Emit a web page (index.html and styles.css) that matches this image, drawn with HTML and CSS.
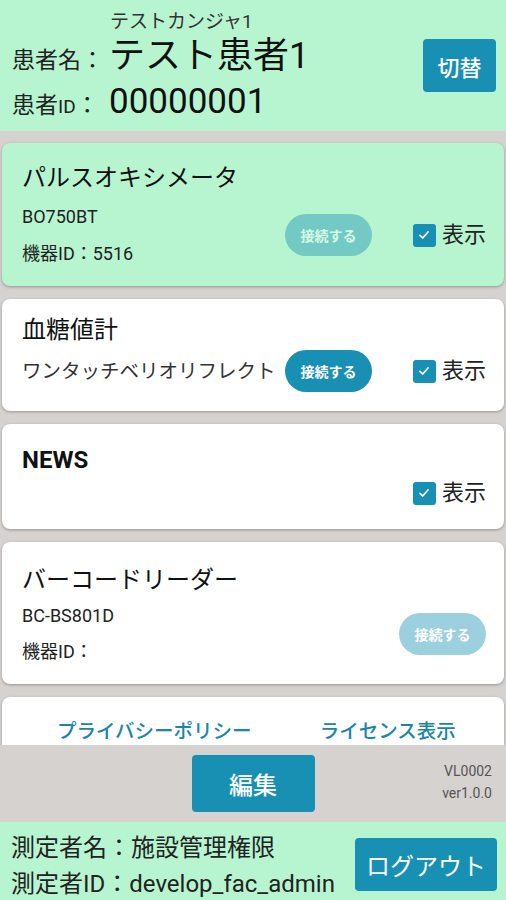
FILE: index.html
```html
<!DOCTYPE html>
<html lang="ja">
<head>
    <meta charset="UTF-8">
    <meta name="viewport" content="width=device-width, initial-scale=1.0">
    <title>機器選択</title>
    <link rel="stylesheet" href="styles.css">
</head>
<body>
    <div class="screen">
        <header class="patient">
            <div class="patient-info">
                <div class="kana">テストカンジャ1</div>
                <div class="patient-row">
                    <span class="label">患者名：</span><span class="patient-name">テスト患者1</span>
                </div>
                <div class="patient-row id-row">
                    <span class="label">患者<span class="small-id">ID</span>：</span><span class="patient-id">00000001</span>
                </div>
            </div>
            <button class="btn btn-switch">切替</button>
        </header>

        <main class="devices">
            <section class="card card-active card-pulse">
                <h2 class="card-title">パルスオキシメータ</h2>
                <div class="card-body">
                    <div class="card-info">
                        <div class="info-line">BO750BT</div>
                        <div class="info-line">機器ID：5516</div>
                    </div>
                    <div class="card-actions">
                        <button class="pill pill-disabled">接続する</button>
                        <label class="show-check"><span class="checkbox"><svg viewBox="0 0 24 24" width="16" height="16"><path d="M6 12.5l4 4 8-9" fill="none" stroke="#fff" stroke-width="2.6" stroke-linecap="round" stroke-linejoin="round"/></svg></span>表示</label>
                    </div>
                </div>
            </section>

            <section class="card card-glucose">
                <h2 class="card-title">血糖値計</h2>
                <div class="card-body">
                    <div class="card-info">
                        <div class="info-line model-name">ワンタッチベリオリフレクト</div>
                    </div>
                    <div class="card-actions">
                        <button class="pill">接続する</button>
                        <label class="show-check"><span class="checkbox"><svg viewBox="0 0 24 24" width="16" height="16"><path d="M6 12.5l4 4 8-9" fill="none" stroke="#fff" stroke-width="2.6" stroke-linecap="round" stroke-linejoin="round"/></svg></span>表示</label>
                    </div>
                </div>
            </section>

            <section class="card card-news">
                <h2 class="card-title news-title">NEWS</h2>
                <div class="card-body">
                    <div class="card-info"></div>
                    <div class="card-actions">
                        <label class="show-check"><span class="checkbox"><svg viewBox="0 0 24 24" width="16" height="16"><path d="M6 12.5l4 4 8-9" fill="none" stroke="#fff" stroke-width="2.6" stroke-linecap="round" stroke-linejoin="round"/></svg></span>表示</label>
                    </div>
                </div>
            </section>

            <section class="card card-barcode">
                <h2 class="card-title">バーコードリーダー</h2>
                <div class="card-body">
                    <div class="card-info">
                        <div class="info-line">BC-BS801D</div>
                        <div class="info-line">機器ID：</div>
                    </div>
                    <div class="card-actions">
                        <button class="pill pill-disabled">接続する</button>
                    </div>
                </div>
            </section>

            <section class="card card-links">
                <a href="#" class="link link-privacy">プライバシーポリシー</a>
                <a href="#" class="link">ライセンス表示</a>
            </section>
        </main>

        <div class="toolbar">
            <div></div>
            <button class="btn btn-edit">編集</button>
            <div class="version">
                <div>VL0002</div>
                <div>ver1.0.0</div>
            </div>
        </div>

        <footer class="operator">
            <div class="operator-info">
                <div class="operator-line">測定者名：施設管理権限</div>
                <div class="operator-line">測定者ID：develop_fac_admin</div>
            </div>
            <button class="btn btn-logout">ログアウト</button>
        </footer>
    </div>
</body>
</html>
```

FILE: styles.css
```css
body {
    margin: 0;
    font-family: Roboto, "Noto Sans CJK JP", sans-serif;
    color: #1b1b1b;
    background-color: #d5d2d0;
}
.screen {
    width: 506px;
    height: 900px;
    display: flex;
    flex-direction: column;
    overflow: hidden;
}
button {
    font-family: inherit;
    border: none;
    cursor: pointer;
}

/* patient header */
.patient {
    height: 131px;
    flex-shrink: 0;
    background-color: #b7f5d0;
    display: flex;
    justify-content: space-between;
    align-items: flex-start;
    padding-left: 12px;
    padding-right: 10px;
}
.kana {
    margin-top: 10px;
    margin-left: 98px;
    font-size: 19px;
    line-height: 24px;
    color: #333;
}
.patient-row {
    display: flex;
    align-items: baseline;
    line-height: 44px;
}
.id-row {
    line-height: 38px;
}
.label {
    display: inline-block;
    width: 97px;
    font-size: 23px;
    color: #222;
}
.small-id {
    font-size: 19px;
}
.patient-name {
    font-size: 36px;
    color: #111;
}
.patient-id {
    font-size: 35px;
    color: #111;
}
.btn {
    background-color: #1790b4;
    color: #fff;
    border-radius: 4px;
    font-weight: 500;
}
.btn-switch {
    margin-top: 39px;
    width: 73px;
    height: 53px;
    font-size: 22px;
    padding: 0;
}

/* device cards */
.devices {
    flex: 1;
    overflow: hidden;
    padding-top: 12px;
}
.card {
    background-color: #fff;
    margin: 0 2px 13px;
    border-radius: 8px;
    box-shadow: 0 1px 3px rgba(0, 0, 0, 0.3);
    padding-left: 20px;
    padding-right: 18px;
}
.card-active {
    background-color: #b7f5d0;
}
.card-title {
    margin: 0;
    font-size: 24px;
    font-weight: 400;
    line-height: 34px;
    color: #111;
}
.news-title {
    font-weight: 700;
}
.card-body {
    display: flex;
    justify-content: space-between;
    align-items: center;
    margin-top: 3px;
}
.card-info {
    font-size: 18px;
    color: #222;
}
.info-line {
    line-height: 37px;
}
.model-name {
    font-size: 19.5px;
    color: #333;
}
.card-actions {
    display: flex;
    align-items: center;
}
.card-pulse {
    padding-top: 18px;
    padding-bottom: 14px;
}
.card-glucose {
    padding-top: 14px;
    padding-bottom: 19px;
}
.card-news {
    padding-top: 19px;
    padding-bottom: 23px;
}
.card-barcode {
    padding-top: 21px;
    padding-bottom: 14px;
}
.card-barcode .card-body {
    margin-top: 1px;
}
.card-barcode .info-line {
    line-height: 36px;
}
.pill {
    width: 87px;
    height: 42px;
    border-radius: 21px;
    background-color: #1790b4;
    color: #fff;
    font-size: 14px;
    font-weight: 700;
    padding: 0;
}
.pill-disabled {
    opacity: 0.42;
}
.show-check {
    display: flex;
    align-items: center;
    margin-left: 41px;
    font-size: 22px;
    line-height: 26px;
    color: #222;
}
.checkbox {
    width: 23px;
    height: 23px;
    border-radius: 3px;
    background-color: #1790b4;
    display: flex;
    align-items: center;
    justify-content: center;
    margin-right: 6px;
}
.card-links {
    display: flex;
    padding-top: 22px;
    padding-bottom: 30px;
    padding-left: 55px;
}
.link {
    font-size: 19.5px;
    line-height: 26px;
    color: #1a86aa;
    text-decoration: none;
    font-weight: 500;
}
.link-privacy {
    margin-right: 68px;
}

/* bottom toolbar */
.toolbar {
    height: 77px;
    flex-shrink: 0;
    display: grid;
    grid-template-columns: 1fr auto 1fr;
    align-items: start;
}
.btn-edit {
    margin-top: 10px;
    width: 123px;
    height: 57px;
    font-size: 24px;
    padding: 0;
}
.version {
    justify-self: end;
    text-align: right;
    margin-top: 15px;
    margin-right: 14px;
    font-size: 14px;
    line-height: 22px;
    color: #555;
}

/* operator footer */
.operator {
    height: 78px;
    flex-shrink: 0;
    background-color: #b7f5d0;
    display: flex;
    justify-content: space-between;
    align-items: flex-start;
    padding-left: 11px;
    padding-right: 9px;
}
.operator-info {
    padding-top: 8px;
}
.operator-line {
    font-size: 24px;
    line-height: 36px;
    color: #222;
}
.btn-logout {
    margin-top: 16px;
    width: 142px;
    height: 53px;
    font-size: 24px;
    font-weight: 400;
    padding: 0;
}
```
